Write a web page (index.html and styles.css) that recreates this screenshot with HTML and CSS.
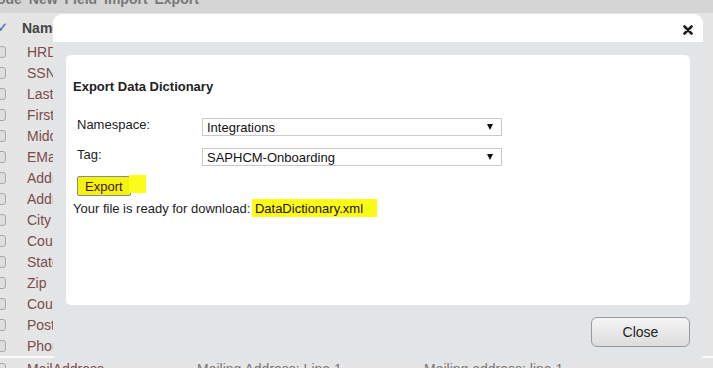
FILE: index.html
```html
<!DOCTYPE html>
<html lang="en">
<head>
    <meta charset="UTF-8">
    <title>Export Data Dictionary</title>
    <link rel="stylesheet" href="styles.css">
</head>
<body>
    <div class="topbar"><span class="topbar-text">ode New Field Import Export</span></div>
    <div class="list">
        <div class="row header"><span class="check">&#10003;</span><span class="name">Name</span></div>
        <div class="row"><span class="box"></span><span class="name">HRDepartment</span></div>
        <div class="row"><span class="box"></span><span class="name">SSN</span></div>
        <div class="row"><span class="box"></span><span class="name">LastName</span></div>
        <div class="row"><span class="box"></span><span class="name">FirstName</span></div>
        <div class="row"><span class="box"></span><span class="name">MiddleName</span></div>
        <div class="row"><span class="box"></span><span class="name">EMail</span></div>
        <div class="row"><span class="box"></span><span class="name">Address1</span></div>
        <div class="row"><span class="box"></span><span class="name">Address2</span></div>
        <div class="row"><span class="box"></span><span class="name">City</span></div>
        <div class="row"><span class="box"></span><span class="name">County</span></div>
        <div class="row"><span class="box"></span><span class="name">State</span></div>
        <div class="row"><span class="box"></span><span class="name">Zip</span></div>
        <div class="row"><span class="box"></span><span class="name">Country</span></div>
        <div class="row"><span class="box"></span><span class="name">PostalCode</span></div>
        <div class="row"><span class="box"></span><span class="name">PhoneNumber</span></div>
        <div class="row last"><span class="box"></span><span class="name">MailAddress</span><span class="col">Mailing Address: Line 1</span><span class="col">Mailing address: line 1</span></div>
    </div>

    <div class="modal">
        <div class="modal-title">
            <svg class="close-x" width="10" height="10" viewBox="0 0 10 10"><path d="M1.5 1.5 L8.5 8.5 M8.5 1.5 L1.5 8.5" stroke="#1e1e1e" stroke-width="2.6" stroke-linecap="round"/></svg>
        </div>
        <div class="modal-body">
            <div class="panel">
                <h2 class="panel-title">Export Data Dictionary</h2>
                <div class="form-grid">
                    <label class="field-label">Namespace:</label>
                    <div class="select"><span>Integrations</span><span class="arrow"></span></div>
                    <label class="field-label">Tag:</label>
                    <div class="select"><span>SAPHCM-Onboarding</span><span class="arrow"></span></div>
                </div>
                <div class="export-wrap"><button class="export-btn">Export</button></div>
                <p class="ready">Your file is ready for download: <span class="marked">DataDictionary.xml</span></p>
            </div>
            <div class="footer">
                <button class="close-btn">Close</button>
            </div>
        </div>
    </div>
</body>
</html>
```

FILE: styles.css
```css
body {
    margin: 0;
    width: 713px;
    height: 368px;
    overflow: hidden;
    background-color: #e5e5e5;
    font-family: "Liberation Sans", Arial, sans-serif;
    position: relative;
}
.topbar {
    height: 13px;
    background-color: #d5d5d5;
    overflow: hidden;
}
.topbar-text {
    display: block;
    margin-top: -9px;
    margin-left: -3px;
    font-size: 14px;
    font-weight: bold;
    color: #777;
    word-spacing: 3px;
}
.list {
    padding-top: 4px;
}
.row {
    height: 21px;
    display: flex;
    align-items: center;
    font-size: 14px;
    color: #7a4c4c;
    white-space: nowrap;
}
.row.header {
    margin-bottom: 3px;
    font-weight: bold;
    color: #444;
}
.row.last {
    border-top: 2px solid #fafafa;
}
.check {
    width: 25px;
    margin-left: -3px;
    color: #5c80b8;
    font-size: 13px;
}
.box {
    width: 8px;
    height: 10px;
    margin-left: -4px;
    margin-right: 21px;
    border: 1px solid #a8a8a8;
    border-radius: 3px;
    background-color: #dedede;
}
.name {
    width: 170px;
}
.col {
    width: 227px;
    color: #777;
}
.modal {
    position: absolute;
    left: 53px;
    top: 14px;
    width: 650px;
    height: 348px;
    border-radius: 9px;
    overflow: hidden;
    background-color: #e2e5e8;
    display: flex;
    flex-direction: column;
}
.modal-title {
    height: 28px;
    background-color: white;
    display: flex;
    justify-content: flex-end;
    align-items: center;
    padding-right: 10px;
    flex-shrink: 0;
}
.close-x {
    margin-top: 4px;
}
.modal-body {
    flex: 1;
    padding: 13px 13px 0 13px;
}
.panel {
    height: 250px;
    box-sizing: border-box;
    background-color: white;
    border-radius: 5px;
    padding: 24px 7px 0 7px;
    font-size: 13px;
    color: #222;
}
.panel-title {
    margin: 0;
    font-size: 13px;
    font-weight: bold;
    line-height: 15px;
    color: #222;
}
.form-grid {
    display: grid;
    grid-template-columns: 125px 300px;
    row-gap: 12px;
    margin: 24px 0 0 4px;
}
.field-label {
    line-height: 15px;
    margin-top: -1px;
}
.select {
    height: 18px;
    box-sizing: border-box;
    border: 1px solid #c9c9c9;
    display: flex;
    align-items: center;
    justify-content: space-between;
    padding: 0 8px 0 4px;
    font-size: 13px;
    color: #111;
}
.arrow {
    width: 0;
    height: 0;
    border-left: 3.5px solid transparent;
    border-right: 3.5px solid transparent;
    border-top: 6px solid #111;
}
.export-wrap {
    position: relative;
    display: inline-block;
    margin: 10px 0 0 4px;
}
.export-wrap::after {
    content: "";
    position: absolute;
    left: 52px;
    top: -1px;
    width: 17px;
    height: 18px;
    background-color: #fbfb1c;
}
.export-btn {
    width: 54px;
    height: 20px;
    padding: 0;
    border: 1px solid #8c8c8c;
    border-radius: 2px;
    background-color: #f3f311;
    font-family: "Liberation Sans", Arial, sans-serif;
    font-size: 13px;
    color: #4a1212;
    text-align: left;
    padding-left: 7px;
    display: block;
}
.ready {
    margin: 4px 0 0 0;
    line-height: 18px;
}
.marked {
    background-color: #fbfb16;
    padding: 2px 14px 1px 3px;
    margin-left: -2px;
    color: #231010;
}
.footer {
    display: flex;
    justify-content: flex-end;
    padding-top: 12px;
}
.close-btn {
    width: 99px;
    height: 30px;
    border: 1px solid #9a9a9a;
    border-radius: 6px;
    background: linear-gradient(#f4f4f4, #dcdcdc);
    font-family: "Liberation Sans", Arial, sans-serif;
    font-size: 14px;
    color: #222;
}
```
